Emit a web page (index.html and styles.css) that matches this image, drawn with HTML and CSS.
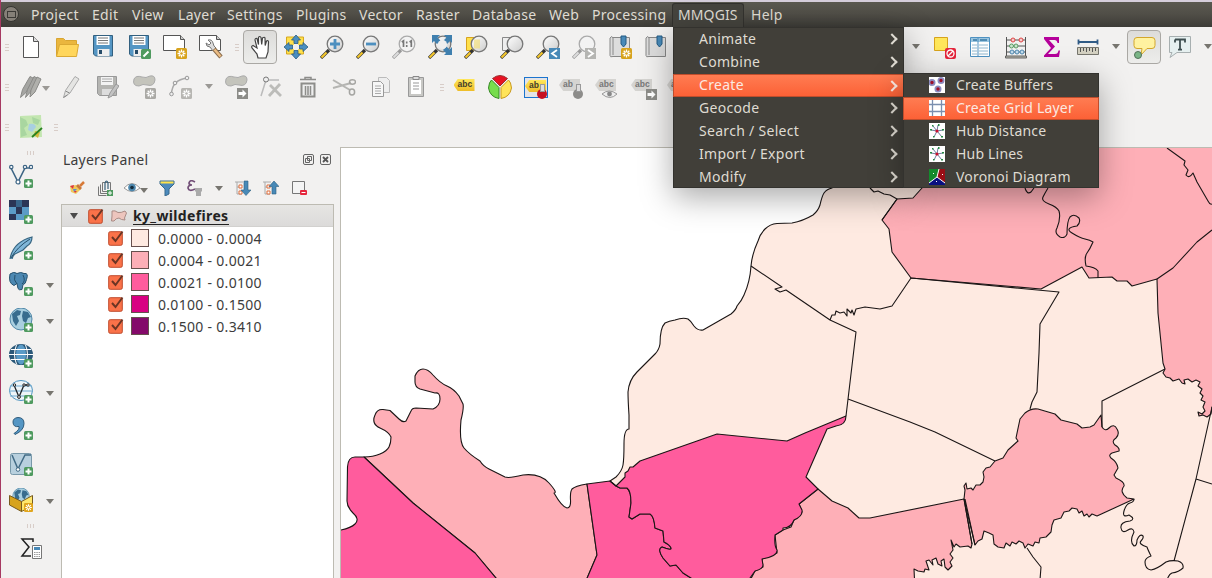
FILE: index.html
```html
<!DOCTYPE html>
<html lang="en">
<head>
<meta charset="utf-8">
<title>QGIS</title>
<link rel="stylesheet" href="styles.css">
</head>
<body>
<svg class="sprite" aria-hidden="true">
<defs>
<linearGradient id="lens" x2="1" y2="1"><stop stop-color="#fff"/><stop offset="1" stop-color="#ccc"/></linearGradient>
<g id="plus"><rect x="15" y="15" width="9" height="9" rx="1.5" fill="#4f9a5f"/><path d="M19.5 16.5v6M16.500 19.500h6" stroke="#fff" stroke-width="2"/></g>
<g id="star"><rect x="0" y="0" width="11" height="11" rx="1.500"/><path d="M5.500 1.500v8M1.500 5.500h8M2.700 2.700l5.600 5.600M8.300 2.700L2.700 8.300" stroke="#fff" stroke-width="1.300"/><circle cx="5.500" cy="5.500" r="1.300"/></g>
<g id="glass"><path d="M1 23l8-8" stroke="#333" stroke-width="3.200"/><path d="M1.500 22.500l5-5" stroke="#f4c72c" stroke-width="2.200"/><circle cx="15" cy="9" r="7.800" fill="url(#lens)" stroke="#777" stroke-width="1.300"/></g>
<g id="glassoff"><path d="M1 23l8-8" stroke="#999" stroke-width="3.200"/><path d="M1.500 22.500l5-5" stroke="#ddd" stroke-width="2"/><circle cx="15" cy="9" r="7.800" fill="#f3f3f3" stroke="#aaa" stroke-width="1.300"/></g>
<g id="blob"><path d="M2 5Q4 1 10 3Q14 4.500 18 2Q23 1 23 6Q22 13 15 11Q11 9.500 7 12Q0 12 2 5z" fill="#c4c4bc" stroke="#aaa"/></g>
<g id="earth"><circle cx="12" cy="11" r="11" fill="#a9cfe0" stroke="#5288a8"/><path d="M3 6l5-4 4 1-1 4-3 1 2 5-3 5-3-5zM14 3l5 1 3 5-3 1-2 5-3-2-1-5zM15 17l3-1v3z" fill="#386c8e"/></g>
</defs>
<symbol id="new" viewBox="0 0 24 24"><path d="M4.500 1.500h10l5 5v16h-15z" fill="#fff" stroke="#555"/><path d="M14.500 1.500v5h5" fill="#ddd" stroke="#555"/></symbol>
<symbol id="open" viewBox="0 0 24 24"><path d="M1.500 21V3.500h7l2 2h11v4" fill="#eab63e" stroke="#d8a531"/><path d="M1.500 21.500l3-12h19l-2 12z" fill="#ffd65c" stroke="#dba934"/></symbol>
<symbol id="save" viewBox="0 0 24 24"><path d="M2.500 .5h19v20.500h-17l-2-2z" fill="#5596c4" stroke="#33607f"/><path d="M5.500 1h13v9h-13z" fill="#fff"/><path d="M7 3h10M7 5.500h10M7 8h10" stroke="#777"/><path d="M6.500 14h12v7h-12z" fill="#eee"/><path d="M8 15h3v4H8z" fill="#264b68"/></symbol>
<symbol id="saveas" viewBox="0 0 24 24"><use href="#save"/><rect x="14" y="14" width="10" height="10" rx="1.500" fill="#4f9a5f"/><path d="M16.500 21.500l5-5" stroke="#fff" stroke-width="2"/></symbol>
<symbol id="layout" viewBox="0 0 24 24"><path d="M.5 .5h17l4 4v11H.5z" fill="#fff" stroke="#555"/><path d="M17.500 .5v4h4" fill="#ccc" stroke="#555"/><use href="#star" x="13" y="13" fill="#d7a31d"/></symbol>
<symbol id="manage" viewBox="0 0 24 24"><path d="M.5 .5h17l4 4v11H.5z" fill="#fff" stroke="#555"/><path d="M17.500 .5v4h4" fill="#ccc" stroke="#555"/><path d="M9 5q4-1 5 3l1 3 2 2-3 3-3-4q-4 0-4-4l3 2 2-2z" fill="#ddd" stroke="#777"/><path d="M15 14l7 8" stroke="#8a6c4c" stroke-width="4.500"/><path d="M15.500 14.500l6 7" stroke="#ecbd84" stroke-width="2.500"/></symbol>
<symbol id="hand" viewBox="0 0 24 24"><path d="M10 23l-1-4-5-6q-1-2 1-2.500l4 2.500L7 5q0-2 2-1.500l1.500 6V2.500q1-2 2.500 0l.7 7 .8-6.500q2-1.500 2.500 0l.2 7.500L18.500 6q2-1 2 1l-.5 10-2 6z" fill="#fff" stroke="#444" stroke-width="1.200"/></symbol>
<symbol id="panto" viewBox="0 0 24 24"><path d="M2.500 2h17v17h-17z" fill="#ffe04b" stroke="#d6a71f"/><path d="M12 6v12M6 12h12" stroke="#f0f0f0" stroke-width="4"/><path d="M12 0l4.500 5H14v3.500h-4V5H7.500zM12 24l4.500-5H14v-3.500h-4V19H7.500zM0 12l5-4.500V10h3.500v4H5v2.500zM24 12l-5-4.500V10h-3.500v4H19v2.500z" fill="#4b8fc0" stroke="#2b5c81" stroke-width=".8"/></symbol>
<symbol id="zin" viewBox="0 0 24 24"><use href="#glass"/><path d="M15 4v10M10 9h10" stroke="#4d8fbf" stroke-width="2.800"/></symbol>
<symbol id="zout" viewBox="0 0 24 24"><use href="#glass"/><path d="M10 9h10" stroke="#4d8fbf" stroke-width="2.800"/></symbol>
<symbol id="z11" viewBox="0 0 24 24"><use href="#glassoff"/><path d="M9.800 7l1.700-1.200v6.200M17.600 7l1.700-1.200v6.200" fill="none" stroke="#777" stroke-width="1.700"/><path d="M14.700 6.500v2M14.700 10v2" stroke="#777" stroke-width="1.600"/></symbol>
<symbol id="zfull" viewBox="0 0 24 24"><use href="#glass"/><path d="M4 0h8L9.500 2.500l3 3-3.500 3.500-3-3L4 8zM24 0h-8l2.500 2.500-3 3L19 9l3-3 2 2zM24 20v-8l-2.500 2.500-3-3L15 15l3 3-2 2z" fill="#3f7fae"/><circle cx="14.500" cy="9.500" r="4.500" fill="#eee"/></symbol>
<symbol id="zsel" viewBox="0 0 24 24"><path d="M2.500 2.500h13v13h-13z" fill="#ffe04b" stroke="#d7a31d"/><use href="#glass"/><path d="M10 4.500h6v9h-6z" fill="#f3df75" opacity=".65"/></symbol>
<symbol id="zlay" viewBox="0 0 24 24"><path d="M2.500 2.500h13v13h-13z" fill="#eee" stroke="#888"/><use href="#glass"/></symbol>
<symbol id="zlast" viewBox="0 0 24 24"><use href="#glass"/><path d="M13 13h11v11H13z" fill="#4889b7"/><path d="M21 15l-5 3.500 5 3.500" fill="none" stroke="#fff" stroke-width="1.800"/></symbol>
<symbol id="znext" viewBox="0 0 24 24"><use href="#glassoff"/><path d="M13 13h11v11H13z" fill="#b5b5b2"/><path d="M16 15l5 3.500-5 3.500" fill="none" stroke="#fff" stroke-width="1.800"/></symbol>
<symbol id="book" viewBox="0 0 24 24"><path d="M5 2.500h16.500v19H5q-3 1-3-1V3q2-3 3 0v17" fill="#ddd" stroke="#888"/><path d="M13 1v8l2.500 3L18 9V1z" fill="#4889b7" stroke="#225b84"/></symbol>
<symbol id="booknew" viewBox="0 0 24 24"><use href="#book"/><use href="#star" x="13" y="13" fill="#d7a31d"/></symbol>
<symbol id="desel" viewBox="0 0 24 24"><path d="M2.500 2.500h13v13h-13z" fill="#ffe75a" stroke="#d7a31d"/><rect x="13" y="13" width="11" height="11" rx="2" fill="#e5253c"/><circle cx="18.500" cy="18.500" r="3.500" fill="none" stroke="#fff" stroke-width="1.300"/><path d="M16 21l5-5" stroke="#fff" stroke-width="1.300"/></symbol>
<symbol id="table" viewBox="0 0 24 24"><path d="M2.500 2.500h19v19h-19z" fill="#fff" stroke="#4e91c1"/><path d="M3 3h18v4H3z" fill="#9bc5df"/><path d="M5 5h4M12 5h7" stroke="#3778a5" stroke-width="1.500"/><path d="M4 10h5M11 10h9M4 13h5M11 13h9M4 16h5M11 16h9M4 19h5M11 19h9" stroke="#91b8d0"/><path d="M10 3v18" stroke="#4e91c1"/></symbol>
<symbol id="abacus" viewBox="0 0 24 24"><path d="M2.500 2v19M21.500 2v19M2 5h20M2 11h20M2 17h20" stroke="#555"/><g fill="#f7cccc" stroke="#d44"><circle cx="9" cy="5" r="2"/><circle cx="17" cy="5" r="2"/></g><g fill="#c9e4cc" stroke="#5a9b63"><circle cx="7.500" cy="11" r="2"/><circle cx="12" cy="11" r="2"/></g><g fill="#c3dcec" stroke="#4e88b0"><circle cx="8" cy="17" r="2"/><circle cx="13" cy="17" r="2"/><circle cx="18" cy="17" r="2"/></g><path d="M1.500 21h21v2h-21z" fill="#bbb9ac" stroke="#666"/></symbol>
<symbol id="sum" viewBox="0 0 24 24"><path d="M4 2h15v6h-1.500q-.5-3-3-3H9l6 6.500L8 19h7q3 0 3.500-3.500H20L19 22H4v-1.500L11 13 4 4z" fill="#b5009a"/></symbol>
<symbol id="ruler" viewBox="0 0 24 24"><path d="M2 7h20M2.500 4.500v5M21.500 4.500v5" stroke="#305b86" stroke-width="1.800"/><path d="M1.500 12.500h21v7h-21z" fill="#d4d1c2" stroke="#77766e"/><path d="M4.500 13v4M7.500 13v3M10.500 13v4M13.500 13v3M16.500 13v4M19.500 13v3" stroke="#555"/></symbol>
<symbol id="tip" viewBox="0 0 24 24"><path d="M5 2.500h15q3 0 3 3v5q0 3-3 3h-5L9 20l1-6.500H5q-3 0-3-3v-5q0-3 3-3z" fill="#fff2a0" stroke="#d3a62c"/><circle cx="6" cy="20" r="3.500" fill="#7ab586" stroke="#537158"/></symbol>
<symbol id="annot" viewBox="0 0 24 24"><path d="M1.500 1.500h21v16H9l-7 5 2-5H1.500z" fill="#e6f0f0" stroke="#a7afb0"/><path d="M7 4.500h10v3M7 4.500v3M12 4.500v10M10 14.700h4" fill="none" stroke="#3e4e50" stroke-width="1.800"/></symbol>
<symbol id="pens" viewBox="0 0 24 24"><path d="M1.500 22.500l2-8L11 1.500l4 2-8 14z" fill="#a5a5a2" stroke="#8b8b88"/><path d="M6.500 22.500l2-8L15 1.500l4 2-8 14z" fill="#a5a5a2" stroke="#8b8b88"/><path d="M11 22l1-7L18 2l4 2-6 13z" fill="#b0b0ac" stroke="#8b8b88"/></symbol>
<symbol id="pen" viewBox="0 0 24 24"><path d="M4.500 22.500l2-7L16 1.500l4 2.500-9 14z" fill="#e5e5e3" stroke="#aaa"/><path d="M6.500 16l4 2M4.500 22.500l4-2.500" stroke="#888"/></symbol>
<symbol id="savepen" viewBox="0 0 24 24"><path d="M2.500 1.500h19v19h-17l-2-2z" fill="#b5b5b2" stroke="#999"/><path d="M6 2h12v8H6z" fill="#f3f3f3"/><path d="M7 4h10M7 6.500h10" stroke="#aaa"/><path d="M7 14h11v6H7z" fill="#ddd"/><path d="M13 23l2-5 6-9 3 2-7 10z" fill="#c3c3c3" stroke="#999"/></symbol>
<symbol id="polynew" viewBox="0 0 24 24"><use href="#blob" y="-1"/><use href="#star" x="13" y="13" fill="#aaa9a5"/></symbol>
<symbol id="curve" viewBox="0 0 24 24"><path d="M2.500 19Q3 5 18 3" fill="none" stroke="#aaa" stroke-width="1.500"/><g fill="#eee" stroke="#999"><circle cx="2.500" cy="19" r="1.800"/><circle cx="6" cy="8" r="1.800"/><circle cx="18" cy="3" r="1.800"/></g><use href="#star" x="12" y="13" fill="#b7b6b2"/></symbol>
<symbol id="polymove" viewBox="0 0 24 24"><use href="#blob" y="-1"/><path d="M13 13h11v11H13z" fill="#8c8c88"/><path d="M14.500 17h4v-2.500l4 4-4 4V20h-4z" fill="#fff"/></symbol>
<symbol id="node" viewBox="0 0 24 24"><path d="M1 21L6 5h13" fill="none" stroke="#bbb" stroke-width="1.500"/><circle cx="6" cy="4.500" r="2.500" fill="#eee" stroke="#777"/><path d="M9 21L20 9M10 10l11 11" stroke="#bcbcb9" stroke-width="2.800"/></symbol>
<symbol id="trash" viewBox="0 0 24 24"><path d="M5.500 8.500h13v13h-13z" fill="#eee" stroke="#8d8d8a" stroke-width="2"/><path d="M4 4.500h16M9 4V2.500h6V4M9.500 11v9M12 11v9M14.500 11v9" stroke="#8d8d8a" fill="none" stroke-width="1.500"/></symbol>
<symbol id="cut" viewBox="0 0 24 24"><path d="M1 5l17 10M1 13l18-5" stroke="#b5b5b2" stroke-width="2"/><ellipse cx="20.500" cy="7" rx="3" ry="2.200" fill="none" stroke="#a5a5a2" stroke-width="1.500"/><ellipse cx="20" cy="17" rx="2.600" ry="3" fill="none" stroke="#a5a5a2" stroke-width="1.500"/></symbol>
<symbol id="copy" viewBox="0 0 24 24"><path d="M10.500 2.500h8l3 3v12h-11z" fill="#eee" stroke="#bbb"/><path d="M4.500 6.500h8l3 3v12h-11z" fill="#f7f7f7" stroke="#999"/><path d="M7 11h6M7 13.500h6M7 16h6M7 18.500h6" stroke="#aaa"/></symbol>
<symbol id="paste" viewBox="0 0 24 24"><path d="M4.500 2.500h15v19h-15z" fill="#c8c8c5" stroke="#999"/><path d="M7 5h10v14H7z" fill="#fff"/><path d="M9 1.500h6v3H9z" fill="#ddd" stroke="#888"/><path d="M9 8h6M9 11h6M9 14h6" stroke="#999"/></symbol>
<symbol id="pie" viewBox="0 0 24 24"><path d="M12 11L4.500 3.500q7.500-6 15 0z" fill="#e81123" stroke="#933"/><path d="M11 12.500v11Q2 22 .5 13 1 7 3.500 5z" fill="#77dd4d" stroke="#398a28"/><path d="M13 12.500v11q9-1.500 10.500-10.500Q23 7 20.500 5z" fill="#ffe45a" stroke="#c99a20"/></symbol>
<symbol id="eye" viewBox="0 0 24 24"><path d="M5 17q7-6 15 0-7 7-15 0z" fill="#eee" stroke="#999"/><circle cx="12.500" cy="17" r="2.400" fill="#888"/></symbol>
<symbol id="plug" viewBox="0 0 24 24"><path d="M1 1l21-1 1 22-22 1z" fill="#c3e6b0"/><path d="M1 2l6 3 2 5-4 3 3 7-6 2zM13 2l8 3-2 5-5-2z" fill="#a9d6a0"/><path d="M10 9q6-1 7 3l-4 5-4-2z" fill="#a8cfe1"/><path d="M16 16l5 1-2 6-4-3z" fill="#d0b83a"/><path d="M13 22L23 13" stroke="#27821f" stroke-width="1.800"/></symbol>
<symbol id="vec" viewBox="0 0 24 24"><path d="M2 4l7 14L16 4h6" fill="none" stroke="#3d6585" stroke-width="1.600"/><g fill="#fff" stroke="#3d6585" stroke-width="1.200"><circle cx="2.300" cy="3" r="1.700"/><circle cx="9" cy="18" r="2"/><circle cx="16" cy="3" r="1.700"/><circle cx="22" cy="3" r="1.700"/></g><use href="#plus"/></symbol>
<symbol id="ras" viewBox="0 0 24 24"><path d="M0 0h20v20H0z" fill="#5b9bc7"/><path d="M0 0h7v7H0zM13 0h7v7h-7zM7 7h6v7H7zM0 14h7v6H0z" fill="#2b3556"/><path d="M7 0h6v7H7z" fill="#38658b"/><use href="#plus"/></symbol>
<symbol id="quill" viewBox="0 0 24 24"><path d="M1 23Q4 6 23 1q0 6-5 9l-4 4-6 3q-4 1-5 6" fill="#80b6d8" stroke="#376581" stroke-width="1.200"/><path d="M2 22Q8 11 21 3" fill="none" stroke="#26506c"/><use href="#plus"/></symbol>
<symbol id="pg" viewBox="0 0 24 24"><path d="M1 2q4-3 7-.5 4-2 7 0 5-1 2.500 6-1 5-3.500 5l-1 5q-3 1-4-1l-1-5-3 2Q-1 11 1 2z" fill="#4c88b2" stroke="#28536f"/><path d="M6 3q-2 5 2 9M14 3q3 6-1 9" fill="none" stroke="#24506d"/><use href="#plus"/></symbol>
<symbol id="wms" viewBox="0 0 24 24"><use href="#earth"/><use href="#plus"/></symbol>
<symbol id="wcs" viewBox="0 0 24 24"><ellipse cx="12" cy="10.500" rx="12" ry="10.500" fill="#2b5879"/><ellipse cx="12" cy="10.500" rx="5" ry="10" fill="#5b9bc7"/><path d="M2 5.500h20M0 10.500h24M2 15.500h20" stroke="#fff" stroke-width="1.100"/><path d="M7.500 1q-4 9.500 0 19M16.500 1q4 9.500 0 19" stroke="#fff" fill="none"/><use href="#plus"/></symbol>
<symbol id="wfs" viewBox="0 0 24 24"><ellipse cx="12" cy="10.500" rx="11.500" ry="10" fill="#eef5f8" stroke="#4f94c0"/><path d="M1 6h22M0 11h24M1 16h22" stroke="#6da8cf"/><path d="M5 5l5 12 5-12h4" fill="none" stroke="#20262b" stroke-width="1.300"/><g fill="#fff" stroke="#222"><circle cx="5.500" cy="5" r="1.200"/><circle cx="10" cy="17" r="1.400"/><circle cx="15" cy="5" r="1.200"/><circle cx="19" cy="5" r="1.200"/></g><use href="#plus"/></symbol>
<symbol id="csv" viewBox="0 0 24 24"><path d="M4 6q0-4 5-4.500 6 0 6 6 0 7-9 11l-1-1q6-4 5-7-6 1-6-4.500z" fill="#5596c4" stroke="#2e5b7b"/><use href="#plus"/></symbol>
<symbol id="virt" viewBox="0 0 24 24"><rect x="1.500" y="1.500" width="21" height="21" rx="2" fill="#b8d0de" stroke="#7898a9"/><path d="M3 3l6 14L16 3h6" fill="none" stroke="#426b85" stroke-width="1.500"/><circle cx="9" cy="17.500" r="1.800" fill="#fff" stroke="#426b85"/><use href="#plus"/></symbol>
<symbol id="gpkg" viewBox="0 0 24 24"><use href="#earth" transform="translate(3 0) scale(.75)"/><path d="M.5 7.500l12 6v10L.5 17z" fill="#d7a31d" stroke="#775b20"/><path d="M12.500 13.500l11-6v10l-11 6z" fill="#ffe76b" stroke="#775b20"/><g transform="translate(15 15) scale(.82)"><use href="#star" fill="#e0a51d"/></g></symbol>
<symbol id="brush" viewBox="0 0 16 16"><path d="M1 6l6-1 5 4-5 5-5-2z" fill="#efc95a"/><path d="M1 6l4-1-1 4z" fill="#d34"/><path d="M4 9l4 0-3 3z" fill="#5b8fd0"/><path d="M5 11l3 0-2 2z" fill="#d34"/><path d="M7 6l2-2 4 4-2 2z" fill="#c9783c"/><path d="M11 6l4-4" stroke="#d77a38" stroke-width="2.500"/></symbol>
<symbol id="group" viewBox="0 0 16 16"><path d="M5.500 2.500h8v9h-8zM3.500 4.500v9h7M1.500 6.500v9h8" fill="none" stroke="#777"/><path d="M8 10V3q1.500-4 3 0v6" fill="none" stroke="#38617b" stroke-width="1.200"/><path d="M10 10h6v6h-6z" fill="#4f9a5f"/><path d="M13 11v4M11 13h4" stroke="#fff"/></symbol>
<symbol id="show" viewBox="0 0 16 16"><path d="M0 8q8-9 16 0-8 7-16 0z" fill="#fff" stroke="#999"/><circle cx="8" cy="7.500" r="3.800" fill="#4d87ad"/><circle cx="8" cy="7.500" r="1.800" fill="#142b3b"/></symbol>
<symbol id="funnel" viewBox="0 0 16 16"><path d="M1 1h14v3l-5 5v5l-4 2V9L1 4z" fill="#4c8abc" stroke="#36698d"/><path d="M1.500 1.500h13v2h-13z" fill="#ffe34b"/></symbol>
<symbol id="expr" viewBox="0 0 16 16"><path d="M8 2Q3-1 2 3q0 2 3 2-4 0-4 3 1 4 7 1" fill="none" stroke="#735078" stroke-width="1.700"/><path d="M8 8h7v3l-1 1v4h-5v-4l-1-1z" fill="#aaa"/></symbol>
<symbol id="down" viewBox="0 0 16 16"><path d="M0 2h8M2 2v12h5M2 7h5" fill="none" stroke="#aaa"/><path d="M4 5h3v3H4zM4 11h3v3H4z" fill="#fff" stroke="#e06f3c"/><path d="M9 1h4v9h3l-5 5.500L6 10h3z" fill="#4889b7" stroke="#2d607f" stroke-width=".6"/></symbol>
<symbol id="up" viewBox="0 0 16 16"><path d="M0 2h8M2 2v12h5M2 7h5" fill="none" stroke="#aaa"/><path d="M4 5h3v3H4zM4 11h3v3H4z" fill="#fff" stroke="#e06f3c"/><path d="M9 14h4V6.500h3L11 1 6 6.500h3z" fill="#4889b7" stroke="#2d607f" stroke-width=".6"/></symbol>
<symbol id="remove" viewBox="0 0 16 16"><path d="M1.500 1.500h12v12h-12z" fill="#f4f4f4" stroke="#777"/><rect x="9" y="10" width="7" height="5" rx="1" fill="#e5253c"/><path d="M10.500 12.500h4" stroke="#fff"/></symbol>
<symbol id="check" viewBox="0 0 16 16"><rect x=".7" y="1.700" width="13.600" height="13.600" rx="1.500" fill="#fa7249" stroke="#bf4c2d"/><path d="M4 7l3.500 4L14.500 1.500" fill="none" stroke="#6b3524" stroke-width="2"/></symbol>
<symbol id="hub" viewBox="0 0 16 16"><path d="M0 0h16v16H0z" fill="#fff"/><path d="M8 8L4 3M8 8l1-6M8 8l6-1M8 8l5 6M8 8l-3 6M8 8L2 7" stroke="#5a6f92" stroke-width=".9"/><path d="M3 2h1.500v1.500H3zM9 1h1.500v2H9zM13 6h2v1.500h-2zM12 13h2v1.500h-2zM4 13h1.500v1.500H4zM1 6h2v1.500H1z" fill="#268b45"/><circle cx="8" cy="8" r="1.600" fill="#c8102e"/></symbol>
</svg>

<header class="menubar">
  <span class="winbtn"></span>
  <span>Project</span><span>Edit</span><span>View</span><span>Layer</span><span>Settings</span><span>Plugins</span><span>Vector</span><span>Raster</span><span>Database</span><span>Web</span><span>Processing</span><span class="active">MMQGIS</span><span>Help</span>
</header>

<div class="toolbars">
  <div class="toolbar">
    <i class="grip start"></i>
    <b><svg><use href="#new"/></svg></b><b><svg><use href="#open"/></svg></b><b><svg><use href="#save"/></svg></b><b><svg><use href="#saveas"/></svg></b><b><svg><use href="#layout"/></svg></b><b><svg><use href="#manage"/></svg></b>
    <i class="grip"></i>
    <b class="on"><svg><use href="#hand"/></svg></b><b><svg><use href="#panto"/></svg></b><b><svg><use href="#zin"/></svg></b><b><svg><use href="#zout"/></svg></b><b><svg><use href="#z11"/></svg></b><b><svg><use href="#zfull"/></svg></b><b><svg><use href="#zsel"/></svg></b><b><svg><use href="#zlay"/></svg></b><b><svg><use href="#zlast"/></svg></b><b><svg><use href="#znext"/></svg></b><b><svg><use href="#booknew"/></svg></b><b><svg><use href="#book"/></svg></b>
    <i class="arrow gap"></i>
    <b><svg><use href="#desel"/></svg></b><b><svg><use href="#table"/></svg></b><b><svg><use href="#abacus"/></svg></b><b><svg><use href="#sum"/></svg></b><b><svg><use href="#ruler"/></svg></b>
    <i class="arrow"></i><b class="on"><svg><use href="#tip"/></svg></b><b><svg><use href="#annot"/></svg></b><i class="arrow"></i>
  </div>
  <div class="toolbar">
    <i class="grip start"></i>
    <b><svg><use href="#pens"/></svg></b><i class="arrow off tight"></i>
    <b><svg><use href="#pen"/></svg></b><b><svg><use href="#savepen"/></svg></b><b class="wide"><svg><use href="#polynew"/></svg></b><b><svg><use href="#curve"/></svg></b><i class="arrow off"></i>
    <b><svg><use href="#polymove"/></svg></b><b><svg><use href="#node"/></svg></b><b><svg><use href="#trash"/></svg></b><b><svg><use href="#cut"/></svg></b><b><svg><use href="#copy"/></svg></b><b><svg><use href="#paste"/></svg></b>
    <i class="grip narrow"></i>
    <b class="label"><em class="tag gold">abc</em></b>
    <b><svg><use href="#pie"/></svg></b>
    <b class="label"><span class="pinned"><em class="tag gold">ab</em><i class="pin red"></i></span></b>
    <b class="label"><em class="tag">ab</em><i class="pin"></i></b>
    <b class="label"><em class="tag">abc</em><svg class="over"><use href="#eye"/></svg></b>
    <b class="label"><em class="tag">abc</em><svg class="over" viewBox="0 0 24 24"><path d="M13 12h11v11H13z" fill="#8c8c88"/><path d="M14.500 16h4v-2.500l4 4-4 4V19h-4z" fill="#fff"/></svg></b>
    <b class="label"><em class="tag">abc</em></b>
  </div>
  <div class="toolbar">
    <i class="grip start"></i><b><svg><use href="#plug"/></svg></b><i class="grip last"></i>
  </div>
</div>

<main class="work">
  <nav class="side">
    <i class="vgrip"></i>
    <div><svg><use href="#vec"/></svg></div>
    <div><svg><use href="#ras"/></svg></div>
    <div><svg><use href="#quill"/></svg></div>
    <div><svg><use href="#pg"/></svg><i class="arrow"></i></div>
    <div><svg><use href="#wms"/></svg><i class="arrow"></i></div>
    <div><svg><use href="#wcs"/></svg></div>
    <div><svg><use href="#wfs"/></svg><i class="arrow"></i></div>
    <div><svg><use href="#csv"/></svg></div>
    <div><svg><use href="#virt"/></svg></div>
    <div><svg><use href="#gpkg"/></svg><i class="arrow"></i></div>
    <i class="vgrip low"></i>
    <div class="stats"><svg viewBox="0 0 24 24"><path d="M15 6V3H4l7 8-7 9h9" fill="none" stroke="#222" stroke-width="1.500"/><path d="M14.500 9.500h9v13h-9z" fill="#fff" stroke="#777"/><path d="M16 11h6v3h-6z" fill="#4889b7"/><path d="M16 16.500h6M16 18.500h6M16 20.500h6" stroke="#999" stroke-dasharray="1.500 .8"/></svg></div>
  </nav>

  <section class="panel">
    <div class="title"><span>Layers Panel</span>
      <svg viewBox="0 0 11 11"><rect x=".5" y=".5" width="10" height="10" rx="1.500" fill="none" stroke="#666"/><path d="M4.500 2.500h4v4h-4zM2.500 4.500h4v4h-4z" fill="none" stroke="#666"/></svg>
      <svg viewBox="0 0 11 11"><rect x=".5" y=".5" width="10" height="10" rx="1.500" fill="none" stroke="#666"/><path d="M3 3l5 5M8 3L3 8" stroke="#555" stroke-width="1.800"/></svg>
    </div>
    <div class="tools">
      <svg><use href="#brush"/></svg><svg><use href="#group"/></svg><svg><use href="#show"/></svg><i class="arrow"></i><svg><use href="#funnel"/></svg><svg><use href="#expr"/></svg><i class="arrow b"></i><svg><use href="#down"/></svg><svg><use href="#up"/></svg><svg><use href="#remove"/></svg>
    </div>
    <div class="tree">
      <div class="layer"><i class="arrow dark"></i><svg class="chk"><use href="#check"/></svg><svg class="poly" viewBox="0 0 17 12"><path d="M2 1q3-1 6 1.500 3 .5 7-1.500l1.500 2-2 5 .5 2q-4 0-6-2-3 0-5 3H1.500l.5-5z" fill="#edc5bd" stroke="#a98b85"/></svg><strong>ky_wildefires</strong></div>
      <div class="class"><svg class="chk"><use href="#check"/></svg><i class="c1"></i><span>0.0000 - 0.0004</span></div>
      <div class="class"><svg class="chk"><use href="#check"/></svg><i class="c2"></i><span>0.0004 - 0.0021</span></div>
      <div class="class"><svg class="chk"><use href="#check"/></svg><i class="c3"></i><span>0.0021 - 0.0100</span></div>
      <div class="class"><svg class="chk"><use href="#check"/></svg><i class="c4"></i><span>0.0100 - 0.1500</span></div>
      <div class="class"><svg class="chk"><use href="#check"/></svg><i class="c5"></i><span>0.1500 - 0.3410</span></div>
    </div>
  </section>

  <svg class="map" viewBox="341 148 871 430">
    <!-- land base -->
    <path class="f1" d="M610 481L616 477Q622 471 623 465T624 444 629 429V415Q628 400 628 392 629 380 637 372T655 354Q659 350 660 344 660 328 665 323 669 321 675 320 683 317 688 319 691 321 694 326 698 331 703 330L731 314Q736 310 737 306 742 300 744 295 750 282 751 266 752 254 758 241 760 234 765 229 770 224 777 223.500L792 223Q803 221 813 215 818 211 820 205 822 196 824 193 827 189 832 188L850 140H1220V590H560z"/>
    <!-- north-eastern counties -->
    <path class="f2" d="M882 220L897 199 913 198 922 188V140H1220V400L1212 407 1211 414 1207 417 1203 415 1199 416 1198 412 1202 414 1205 411 1203 407 1205 402 1201 400 1203 396 1200 393 1202 389 1198 386 1200 382 1196 380 1192 382 1188 379 1184 380 1185 384 1182 383 1179 379 1173 381 1170 378 1166 377 1163 373 1165 369 1163 363 1158 313 1157 279 1132 286 1127 281 1117 281 1112 277 1089 278 1082 267 1041 289 911 278 892 252 889 229z"/>
    <!-- central county -->
    <path class="f2" d="M964 499L965 490 964 486 966 483 967 489 971 488 973 490 976 485 980 485 983 482 984 477 983 472 986 468 990 467 995 461 1003 458 1008 450 1018 441 1016 438 1020 419 1025 413Q1031 408 1038 409L1055 414 1061 420 1077 424 1082 428 1090 427 1094 425 1101 415 1102 427Q1105 432 1109 428 1114 423 1117 429 1120 434 1116 438 1111 441 1115 445 1120 448 1119 451L1112 453Q1108 455 1111 458 1117 462 1118 468L1114 475 1116 478Q1125 482 1124 486 1119 492 1127 498L1134 499 1097 516 1092 514 1089 517 1087 514 1084 516 1082 511 1079 513 1077 509 1072 508 1069 511 1064 512 1061 518 1054 520 1052 525 1051 532 1046 537 1040 538 1039 543 1035 542 1033 546 1028 544 1025 548 1023 543 1019 541 1016 544 1012 542 1010 546 1006 543 1004 548 998 547 994 544 993 535 989 533 984 531 982 539 978 541 975 545z"/>
    <path class="f2" d="M818 489L832 501 848 508 859 518 870 518 964 499 972 544 971 548 968 546 960 547 956 544 954 547 951 540 953 550 950 554 953 558 950 562 952 566 948 570 945 567 944 559 941 561 942 566 938 564 936 558 932 560 933 565 929 560 926 561 928 567 929 570 925 569 924 572 918 571 914 569 915 590H745L755 571 763 567 762 559 777 553 775 535 783 530 791 527 794 520 802 512 799 504z"/>
    <!-- western counties -->
    <path class="f2" d="M364 457Q373 457 380 454T389 447 391 437Q389 432 380 428T375 415Q377 409 383 409.500L390 410.500 399 419Q403 423 406 421L411 411Q412 408 416 408L433 409Q440 406 440 399T435 393L420 389Q415 387 415 382V376Q418 369 423 369T433 375Q440 383 447 386T459 396L463 404Q464 408 461 420 459 442 464 448T480 461Q483 466 489 469L505 477Q509 478.500 523 475 540 473 549 483T554 493Q562 507 567 508 571 508 570.500 500 570 492 572 489 575 486 587 484L597 555 582 590H506L475 553 413 503z"/>
    <path class="f3" d="M335 531Q350 529 355 524T353 513Q347 507 347 501L347.500 467Q348 457 355 457H364L413 503 475 553 506 590H335z"/>
    <path class="f3" d="M587 484L610 481 616 486 620 488 627 488Q631 491 631 503L629 517 632 519 640 514 650 514Q654 516 655 528L663 531 664 542Q670 545 671 548T662 547Q657 549 663 558L670 566 676 565 683 573 710 590H582L597 555z"/>
    <path class="f3" d="M846 416L805 433 787 441 717 434 640 461 633 467 630 467 628 471 625 473 625 477 620 482 616 486 620 488 627 488Q631 491 631 503L629 517 632 519 640 514 650 514Q654 516 655 528L663 531 664 542Q670 545 671 548T662 547Q657 549 663 558L670 566 676 565 683 573 710 590H745L750 578 755 571Q763 569 763 565L762 559Q778 556 777 550 774 546 775 535L783 530 783 528Q791 528 794 520 803 516 802 510L799 504 818 489 806 477 827 429 836 426Q846 425 846 416z"/>
    <!-- inner boundaries -->
    <path class="line" d="M751 266L782 287 775 289 780 292 786 290 830 320 856 332 846 416M830 320L832 315 835 315 836 311 840 313 844 312 847 316V309L851 313 852 310 854 315 856 309 865 307 880 309 892 306 911 278M848 399L910 422 935 432 995 461M911 278L1059 292 1040 324 1039 353 1037 392 1032 402 1030 409M1157 279L1173 268 1197 242 1212 230M1165 369L1102 401V427M964 499L972 544M965 499L975 545M616 486L610 481M882 220L897 199 890 195 884 194 878 191 874 192 870 188"/>
    <path class="line" d="M1098 278V271Q1095 267 1086 266 1084 257 1087 253T1093 242Q1090 240 1085 239T1072 233 1077 226Q1081 222 1079 218 1074 213 1070 217 1067 221 1067 234 1065 239 1060 237 1054 233 1057 228 1061 218 1059 211 1057 207 1049 204T1043 197 1048 188M1025 188Q1027 195 1031 192L1034 188M1167 148L1185 161 1184 165 1188 170 1186 175Q1189 179 1193 173L1197 182 1208 201Q1210 205 1212 204"/>
    <path class="line" d="M1134 499Q1134 502 1130 503T1124 511 1129 515Q1136 519 1130 521 1120 522 1121 528 1122 534 1128 530 1133 527 1134 532 1129 542 1134 546 1137 546 1137 540 1140 533 1143 536 1144 538 1141 541T1147 547Q1148 550 1151 556 1145 558 1145 562 1145 569 1151 570 1157 569 1166 562 1171 560 1178 561 1184 563 1183 568 1179 572 1172 573 1169 574 1167 580M1174 561L1196 479 1212 484M1196 479L1212 407M1027 548L1033 557 1041 567 1040 580"/>
  </svg>
</main>

<div class="menu main-menu">
  <div>Animate</div><div>Combine</div><div class="hot">Create</div><div>Geocode</div><div>Search / Select</div><div>Import / Export</div><div>Modify</div>
</div>
<div class="menu submenu">
  <div><svg viewBox="0 0 16 16"><path d="M0 0h16v16H0z" fill="#fff"/><g fill="#a01028" stroke="#8c8cc0" stroke-width="1.800"><circle cx="3" cy="5.500" r="2.600"/><circle cx="12" cy="3.500" r="2.600"/><circle cx="9" cy="12" r="2.600"/></g></svg>Create Buffers</div>
  <div class="hot"><svg viewBox="0 0 16 16"><path d="M0 0h16v16H0z" fill="#fff"/><path d="M3.500 0v16M12.500 0v16M0 4.500h16M0 11.500h16" stroke="#7b8fae" stroke-width="1.300"/></svg>Create Grid Layer</div>
  <div><svg><use href="#hub"/></svg>Hub Distance</div>
  <div><svg><use href="#hub"/></svg>Hub Lines</div>
  <div><svg viewBox="0 0 16 16"><path d="M0 0h10L8 8 0 14z" fill="#138a2c"/><path d="M10 0h6v14L8 8z" fill="#990f16"/><path d="M0 16v-2l8-6 8 6v2z" fill="#0a1080"/><path d="M10 0L8 8 0 14M8 8l8 6" fill="none" stroke="#fff"/><path d="M4 4h1v1H4zM13 5h1v1h-1zM7 12h1v1H7z" fill="#fff"/></svg>Voronoi Diagram</div>
</div>
</body>
</html>
```
FILE: styles.css
```css
* { box-sizing: border-box; }
html, body { margin: 0; height: 578px; overflow: hidden; }
body {
  position: relative;
  display: flex;
  flex-direction: column;
  background: #f2f1f0;
  border-left: 1px solid #a63a62;
  font: 14px/23px "Noto Sans", sans-serif;
  color: #3c3c3c;
}
svg { display: block; flex: none; }
.sprite { position: absolute; width: 0; height: 0; }

/* menu bar */
.menubar {
  flex: none;
  display: grid;
  grid-template-columns: 30px 61px 40px 46px 49px 69px 63px 57px 56px 77px 43px 81px 78px 60px;
  height: 27px;
  padding-top: 2px;
  margin-left: -1px;
  border-top: 2px solid #d5cedb;
  background: linear-gradient(#5a5950, #514f48 45%, #3d3c37);
  color: #dfdbd2;
  line-height: 21px;
  white-space: nowrap;
  letter-spacing: .3px;
}
.menubar span:nth-child(n+2) { padding-left: 1px; }
.winbtn {
  width: 16px;
  height: 16px;
  margin: 2px 0 0 3px;
  border-radius: 50%;
  border: 1px solid #343430;
  background: #858078;
  display: grid;
  place-items: center;
}
.winbtn::after { content: ""; width: 7px; height: 5px; border: 1px solid #3b3a36; }
.menubar .active {
  margin: -1px 0 0 0;
  padding: 1px 0 0 5px !important;
  height: 24px;
  width: 72px;
  border: 1px solid #33322e;
  border-bottom: 0;
  border-radius: 3px 3px 0 0;
  background: #45443e;
  line-height: 20px;
  letter-spacing: .1px;
}

/* toolbars */
.toolbars { flex: none; height: 120px; }
.toolbar { display: flex; align-items: center; height: 40px; overflow: hidden; }
.toolbar b {
  flex: none;
  position: relative;
  width: 36px;
  height: 36px;
  display: flex;
  align-items: center;
  justify-content: center;
  font-weight: normal;
}
.toolbar b svg { width: 24px; height: 24px; }
.toolbar b.wide { width: 38px; }
.toolbar b.on::before {
  content: "";
  position: absolute;
  inset: 1px;
  border: 1px solid #aaa8a4;
  border-radius: 4px;
  background: linear-gradient(#dddcda, #ededeb);
}
.toolbar b.on svg { position: relative; }
.grip {
  flex: none;
  width: 13px;
  height: 7px;
  background: repeating-linear-gradient(#d8cdc8 0 1px, transparent 1px 3px) 6px 0 / 4px 7px no-repeat;
}
.grip.start { width: 12px; background-position: 4px 0; }
.grip.narrow { width: 12px; }
.grip.last { background-position: 5px 0; }
.arrow { flex: none; width: 20px; height: 6px; display: flex; justify-content: center; }
.arrow::before { content: ""; border: 4px solid transparent; border-top: 5px solid #77756f; border-bottom: 0; }
.arrow.off::before { border-top-color: #9b9995; }
.arrow.gap { margin-left: 232px; }
.arrow.off { width: 19px; }
.arrow.off.tight { width: 14px; margin: 4px 0 0 -10px; }

/* label tool icons */
.toolbar .label { align-items: flex-start; padding-top: 10px; }
.toolbar .label:first-of-type { width: 37px; }
.tag {
  width: 21px;
  height: 12px;
  padding-left: 4px;
  background: #b9b8b3;
  clip-path: polygon(0 50%, 20% 0, 100% 0, 100% 100%, 20% 100%);
  font: bold 8.5px/11px "Liberation Sans", sans-serif;
  color: #777;
}
.toolbar .label .tag:not(.gold) { background: #d5d4d1; margin-left: -5px; }
.tag.gold { background: linear-gradient(#ffe75a, #eebd28); color: #443d2a; }
.pinned {
  width: 24px;
  height: 21px;
  margin-top: -2px;
  padding-top: 2px;
  border: 1px solid #1b74cf;
  background: #e4e4e6;
}
.pinned .tag { display: block; }
.pin { position: absolute; left: 19px; top: 20px; width: 10px; height: 10px; border-radius: 50%; background: #8d8c8a; }
.pin::before { content: ""; position: absolute; left: 3px; top: -5px; width: 3px; height: 6px; background: #ddd; border: 1px solid #999; }
.pin.red { background: #c51022; }
.toolbar svg.over { position: absolute; left: 7px; top: 8px; }

/* work area */
.work { flex: 1; display: flex; min-height: 0; }
.side { flex: none; width: 60px; padding-top: 4px; }
.side > div { display: flex; align-items: center; height: 36px; padding-left: 8px; }
.side div svg { width: 24px; height: 24px; }
.side .arrow { margin: 3px 0 0 7px; }
.vgrip {
  display: block;
  width: 7px;
  height: 4px;
  margin: 0 0 3px 26px;
  background: repeating-linear-gradient(90deg, #d8cdc8 0 1px, transparent 1px 3px);
}
.vgrip.low { margin-top: 6px; margin-bottom: 2px; }
.side .stats { padding-left: 17px; }

.panel { flex: none; display: flex; flex-direction: column; width: 273px; }
.title { display: flex; align-items: center; height: 25px; padding: 0 3px 0 2px; gap: 6px; letter-spacing: .2px; }
.title span { flex: 1; }
.title svg { width: 11px; height: 11px; }
.tools { display: flex; align-items: center; height: 32px; padding-left: 8px; }
.tools svg { width: 16px; height: 16px; margin-right: 12px; }
.tools svg:nth-child(2) { margin-right: 11px; }
.tools svg:nth-child(3) { margin-right: 0; }
.tools .arrow { width: 10px; margin: 5px 10px 0 -1px; }
.tools .arrow.b { margin: 2px 11px 0 -1px; }
.tools svg:nth-child(8) { margin-right: 12px; }
.tree { flex: 1; border: 1px solid #bdbbb2; border-bottom: 0; background: #fff; }
.layer {
  display: flex;
  align-items: center;
  height: 22px;
  background: linear-gradient(#e6e5e3, #dcdbda);
  border-bottom: 1px solid #d2d1cf;
}
.layer .arrow { width: 24px; }
.arrow.dark::before { border-top: 6px solid #4a4a4a; }
.chk { width: 16px; height: 16px; }
.layer .chk { margin-left: 2px; }
.poly { width: 17px; height: 12px; margin-left: 6px; }
.layer strong {
  margin: 2px 0 0 6px;
  font-size: 14px;
  line-height: 16px;
  letter-spacing: .35px;
  border-bottom: 1px solid #222;
  color: #222;
}
.class { display: flex; align-items: center; height: 22px; padding-left: 46px; }
.class i { width: 18px; height: 18px; margin: 0 10px 0 7px; border: 1px solid #66504d; }
.class span { margin-left: -1px; letter-spacing: .3px; }
.c1 { background: #feeae1; }
.c2 { background: #fdafb7; }
.c3 { background: #ff5c9d; }
.c4 { background: #d80082; }
.c5 { background: #84096a; }

/* map canvas */
.map {
  flex: 1;
  margin-left: 6px;
  border-left: 1px solid #bdbbb2;
  border-top: 1px solid #bdbbb2;
  background: #fff;
  min-width: 0;
  height: 431px;
}
.map path { stroke: #1a1515; stroke-width: 1.1; stroke-linejoin: round; }
.f1 { fill: #feeae1; }
.f2 { fill: #feafb7; }
.f3 { fill: #ff5c9d; }
.map .line { fill: none; }

/* drop-down menus */
.menu {
  position: absolute;
  background: #413f39;
  border: 1px solid #33322e;
  color: #dfdbd2;
  box-shadow: 0 9px 30px rgba(0, 0, 0, .34);
}
.menu div { position: relative; height: 23px; line-height: 22px; white-space: nowrap; letter-spacing: .3px; }
.menu .hot {
  margin: 0 -1px;
  background: linear-gradient(#ff7c52, #fc6136);
  border: 1px solid #c04d2c;
  line-height: 20px;
  color: #fbe9e2;
}
.main-menu { left: 672px; top: 27px; width: 231px; height: 161px; }
.main-menu div { padding-left: 25px; }
.main-menu div::after {
  content: "";
  position: absolute;
  right: 7px;
  top: 7px;
  width: 6px;
  height: 6px;
  border: solid currentColor;
  border-width: 2px 2px 0 0;
  transform: rotate(45deg);
}
.submenu { left: 902px; top: 73px; width: 196px; height: 115px; }
.submenu div { display: flex; align-items: center; padding: 0 0 2px 25px; letter-spacing: .2px; }
.submenu svg { width: 16px; height: 16px; margin-right: 11px; }
```
